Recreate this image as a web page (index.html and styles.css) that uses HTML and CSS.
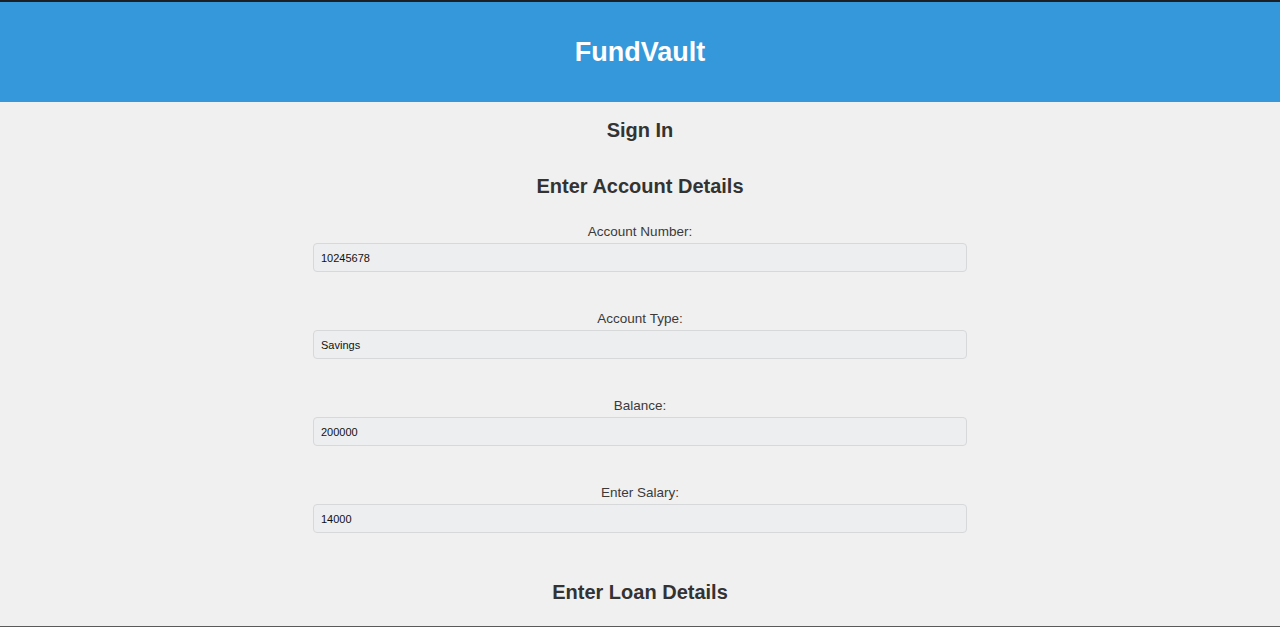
FILE: index.html
```html
<!DOCTYPE html>
<html lang="en">
<head>
<meta charset="utf-8">
<title>FundVault</title>
<link rel="stylesheet" href="styles.css">
</head>
<body>
<div class="topstrip"></div>
<header class="header">
  <h1 class="brand">FundVault</h1>
</header>
<main class="main">
  <h2 class="title">Sign In</h2>
  <section class="form">
    <h2 class="section-title">Enter Account Details</h2>
    <div class="field">
      <label class="label" for="acc">Account Number:</label>
      <input class="input" id="acc" type="text" value="10245678">
    </div>
    <div class="field">
      <label class="label" for="type">Account Type:</label>
      <input class="input" id="type" type="text" value="Savings">
    </div>
    <div class="field">
      <label class="label" for="bal">Balance:</label>
      <input class="input" id="bal" type="text" value="200000">
    </div>
    <div class="field">
      <label class="label" for="sal">Enter Salary:</label>
      <input class="input" id="sal" type="text" value="14000">
    </div>
    <h2 class="section-title loan">Enter Loan Details</h2>
  </section>
</main>
<div class="bottomline"></div>
</body>
</html>
```

FILE: styles.css
```css
* { box-sizing: border-box; }
html, body {
  margin: 0;
  padding: 0;
}
body {
  background: #f0f0f0;
  font-family: "Liberation Sans", Arial, sans-serif;
  color: #333;
  overflow: hidden;
}
.topstrip {
  height: 2px;
  background: #1c1f24;
}
.header {
  height: 100px;
  background: #3498db;
  display: flex;
  align-items: center;
  justify-content: center;
}
.brand {
  margin: 0;
  color: #fff;
  font-size: 27px;
  font-weight: bold;
  line-height: 30px;
}
.main {
  padding-top: 17px;
}
.title {
  margin: 0;
  text-align: center;
  font-size: 20px;
  line-height: 23px;
  font-weight: bold;
  color: #333;
}
.form {
  width: 654px;
  margin: 33px auto 0;
}
.section-title {
  margin: 0 0 26px;
  text-align: center;
  font-size: 20px;
  line-height: 23px;
  font-weight: bold;
  color: #333;
}
.section-title.loan {
  margin-top: 48px;
}
.field {
  display: flex;
  flex-direction: column;
  margin-bottom: 39px;
}
.field:last-of-type {
  margin-bottom: 0;
}
.label {
  display: block;
  text-align: center;
  font-size: 13.5px;
  line-height: 16px;
  color: #3a3a3a;
  margin-bottom: 3px;
}
.input {
  width: 100%;
  height: 29px;
  border: 1px solid #d6d8da;
  border-radius: 4px;
  background: #eceeef;
  padding: 0 7px;
  font-family: "Liberation Sans", Arial, sans-serif;
  font-size: 11px;
  color: #111;
  outline: none;
}
.bottomline {
  position: fixed;
  left: 0;
  right: 0;
  bottom: 0;
  height: 1px;
  background: #5a5a5a;
}
```
